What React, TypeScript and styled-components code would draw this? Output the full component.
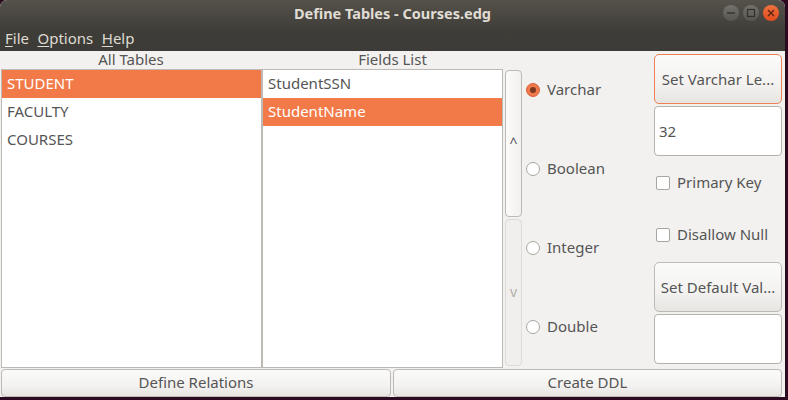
import styled, { createGlobalStyle } from "styled-components";

const Global = createGlobalStyle`
  html, body {
    margin: 0;
    padding: 0;
    background: #2c0b20;
  }
  body {
    font-family: "Noto Sans", "Open Sans", sans-serif;
    overflow: hidden;
  }
`;

const AppWindow = styled.div`
  width: 785px;
  height: 397px;
  display: flex;
  flex-direction: column;
  border-radius: 7px 7px 0 0;
  overflow: hidden;
  background: #f2f1ef;
`;

// TITLE + MENU
const Header = styled.div`
  height: 51px;
  flex: none;
  background: linear-gradient(#55524b, #3f3d38 60%, #3c3b37);
  color: #dfdbd2;
`;

const TitleBar = styled.div`
  height: 26px;
  box-sizing: border-box;
  padding-bottom: 1px;
  display: flex;
  align-items: center;
  justify-content: center;
  position: relative;
`;

const Title = styled.div`
  font-size: 14.5px;
  font-weight: 700;
  color: #e0ddd5;
`;

const WindowButtons = styled.div`
  position: absolute;
  right: 6px;
  top: 5px;
  display: flex;
  gap: 4px;
`;

const WindowButton = styled.div<{ $close?: boolean }>`
  width: 16px;
  height: 16px;
  border-radius: 50%;
  display: flex;
  align-items: center;
  justify-content: center;
  background: ${(p) =>
    p.$close
      ? "linear-gradient(#f0723f, #df4a1c)"
      : "linear-gradient(#74716b, #575550)"};
`;

const MenuBar = styled.div`
  height: 25px;
  box-sizing: border-box;
  padding: 0 0 2px 5px;
  display: flex;
  align-items: center;
  gap: 8.5px;
`;

const MenuItem = styled.span`
  font-size: 15px;
  color: #dfdbd2;
`;

const Mnemonic = styled.span`
  text-decoration: underline;
  text-underline-offset: 2px;
`;

// BODY
const Body = styled.div`
  flex: 1;
  min-height: 0;
  display: grid;
  grid-template-columns: 262px 240px 21px 130px 128px;
  grid-template-rows: 18px 299px 29px;
  padding: 0 3px 0 1px;
`;

const ListTitle = styled.div<{ $wide?: boolean }>`
  grid-column: ${(p) => (p.$wide ? "2 / 4" : "1")};
  grid-row: 1;
  font-size: 15px;
  line-height: 17px;
  text-align: center;
  padding-right: 2px;
  color: #555;
`;

const ListBox = styled.div<{ $col: number }>`
  grid-column: ${(p) => p.$col};
  grid-row: 2;
  background: #fff;
  border: 1px solid #bdbab5;
  border-right-width: ${(p) => (p.$col === 1 ? 2 : 1)}px;
  border-left-width: ${(p) => (p.$col === 1 ? 1 : 0)}px;
  box-sizing: border-box;
  display: flex;
  flex-direction: column;
`;

const ListRow = styled.div<{ $selected?: boolean }>`
  height: 28px;
  line-height: 26px;
  font-size: 15px;
  padding-left: 5px;
  background: ${(p) => (p.$selected ? "#f27a48" : "transparent")};
  color: ${(p) => (p.$selected ? "#fff" : "#555")};
`;

const Arrows = styled.div`
  grid-column: 3;
  grid-row: 1 / 3;
  padding: 19px 0 2px 2px;
  display: flex;
  flex-direction: column;
  gap: 2px;
`;

const ArrowButton = styled.div<{ $disabled?: boolean }>`
  flex: 1;
  width: 17px;
  box-sizing: border-box;
  padding-bottom: 2px;
  border: 1px solid ${(p) => (p.$disabled ? "#dddbd7" : "#bdbab5")};
  border-radius: 4px;
  display: flex;
  align-items: center;
  justify-content: center;
  font-size: 14px;
  color: ${(p) => (p.$disabled ? "#b0aeaa" : "#4c4c4c")};
  background: ${(p) =>
    p.$disabled
      ? "#f0efed"
      : "linear-gradient(90deg, #fbfbfa, #f1f0ee)"};
`;

const RadioColumn = styled.div`
  grid-column: 4;
  grid-row: 1 / 3;
  display: grid;
  grid-template-rows: repeat(4, 79px);
  padding-left: 2px;
`;

const RadioRow = styled.div`
  display: flex;
  align-items: center;
  gap: 7px;
  height: 78px;
`;

const OptionLabel = styled.span`
  font-size: 15px;
  padding-bottom: 2px;
  color: #555;
`;

const RadioDot = styled.span<{ $checked?: boolean }>`
  width: 12px;
  height: 12px;
  flex: none;
  border-radius: 50%;
  display: flex;
  align-items: center;
  justify-content: center;
  border: 1px solid ${(p) => (p.$checked ? "#d9623a" : "#a8a6a1")};
  background: ${(p) => (p.$checked ? "#f0784a" : "#fff")};
  &::after {
    content: "";
    display: ${(p) => (p.$checked ? "block" : "none")};
    width: 6px;
    height: 6px;
    border-radius: 50%;
    background: #7a3a22;
  }
`;

const ControlColumn = styled.div`
  grid-column: 5;
  grid-row: 1 / 3;
  padding-top: 3px;
  display: flex;
  flex-direction: column;
`;

const PushButton = styled.div<{ $focused?: boolean }>`
  height: 50px;
  flex: none;
  box-sizing: border-box;
  padding-bottom: 1px;
  border: 1px solid ${(p) => (p.$focused ? "#ee8052" : "#bdbab5")};
  border-radius: 5px;
  display: flex;
  align-items: center;
  justify-content: center;
  font-size: 15px;
  color: #555;
  white-space: nowrap;
  background: linear-gradient(#fbfbfa, #f3f2f0 60%, #e6e5e2);
`;

const TextBox = styled.div`
  height: 50px;
  flex: none;
  margin-top: 2px;
  box-sizing: border-box;
  border: 1px solid #b5b2ad;
  border-radius: 4px;
  background: #fff;
  display: flex;
  align-items: center;
  padding-left: 4px;
  font-size: 15px;
  color: #555;
`;

const CheckRow = styled.div<{ $height: number; $lift: number }>`
  height: ${(p) => p.$height}px;
  box-sizing: border-box;
  padding: 0 0 ${(p) => p.$lift}px 2px;
  flex: none;
  display: flex;
  align-items: center;
  gap: 7px;
`;

const CheckBox = styled.span`
  width: 12px;
  height: 12px;
  flex: none;
  border: 1px solid #a8a6a1;
  border-radius: 2px;
  background: #fff;
`;

const Footer = styled.div`
  grid-column: 1 / -1;
  grid-row: 3;
  display: grid;
  grid-template-columns: 390px 389px;
  gap: 2px;
  padding-top: 1px;
`;

const FooterButton = styled.div`
  box-sizing: border-box;
  padding-bottom: 2px;
  border: 1px solid #bdbab5;
  border-radius: 4px;
  display: flex;
  align-items: center;
  justify-content: center;
  font-size: 15px;
  color: #555;
  background: linear-gradient(#fbfbfa, #f3f2f0 60%, #e6e5e2);
`;

const types = ["Varchar", "Boolean", "Integer", "Double"];

const App = () => {
  return (
    <>
      <Global />
      <AppWindow>
        <Header>
          <TitleBar>
            <Title>Define Tables - Courses.edg</Title>
            <WindowButtons>
              <WindowButton>
                <svg width="10" height="10" viewBox="0 0 10 10">
                  <path d="M1 5h8" stroke="#33312d" strokeWidth="1.4" />
                </svg>
              </WindowButton>
              <WindowButton>
                <svg width="10" height="10" viewBox="0 0 10 10">
                  <rect x="1.5" y="1.5" width="7" height="7" fill="none" stroke="#33312d" strokeWidth="1.2" />
                </svg>
              </WindowButton>
              <WindowButton $close>
                <svg width="10" height="10" viewBox="0 0 10 10">
                  <path d="M2 2l6 6M8 2l-6 6" stroke="#5a2410" strokeWidth="1.4" />
                </svg>
              </WindowButton>
            </WindowButtons>
          </TitleBar>
          <MenuBar>
            <MenuItem><Mnemonic>F</Mnemonic>ile</MenuItem>
            <MenuItem><Mnemonic>O</Mnemonic>ptions</MenuItem>
            <MenuItem><Mnemonic>H</Mnemonic>elp</MenuItem>
          </MenuBar>
        </Header>
        <Body>
          <ListTitle>All Tables</ListTitle>
          <ListTitle $wide>Fields List</ListTitle>
          <ListBox $col={1}>
            <ListRow $selected>STUDENT</ListRow>
            <ListRow>FACULTY</ListRow>
            <ListRow>COURSES</ListRow>
          </ListBox>
          <ListBox $col={2}>
            <ListRow>StudentSSN</ListRow>
            <ListRow $selected>StudentName</ListRow>
          </ListBox>
          <Arrows>
            <ArrowButton>^</ArrowButton>
            <ArrowButton $disabled>v</ArrowButton>
          </Arrows>
          <RadioColumn>
            {types.map((t, i) => (
              <RadioRow key={t}>
                <RadioDot $checked={i === 0} />
                <OptionLabel>{t}</OptionLabel>
              </RadioRow>
            ))}
          </RadioColumn>
          <ControlColumn>
            <PushButton $focused>Set Varchar Le...</PushButton>
            <TextBox>32</TextBox>
            <CheckRow $height={54} $lift={0}>
              <CheckBox />
              <OptionLabel>Primary Key</OptionLabel>
            </CheckRow>
            <CheckRow $height={52} $lift={2}>
              <CheckBox />
              <OptionLabel>Disallow Null</OptionLabel>
            </CheckRow>
            <PushButton>Set Default Val...</PushButton>
            <TextBox />
          </ControlColumn>
          <Footer>
            <FooterButton>Define Relations</FooterButton>
            <FooterButton>Create DDL</FooterButton>
          </Footer>
        </Body>
      </AppWindow>
    </>
  );
};

export default App;
